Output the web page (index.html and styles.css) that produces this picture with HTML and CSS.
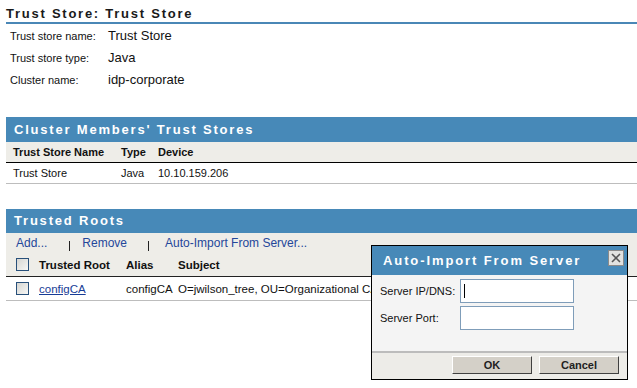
FILE: index.html
```html
<!DOCTYPE html>
<html>
<head>
<meta charset="utf-8">
<link rel="stylesheet" href="styles.css">
</head>
<body>
<div class="page">
  <h1 class="page-title">Trust Store: Trust Store</h1>
  <div class="props">
    <div class="prop-label">Trust store name:</div><div class="prop-value">Trust Store</div>
    <div class="prop-label">Trust store type:</div><div class="prop-value">Java</div>
    <div class="prop-label">Cluster name:</div><div class="prop-value">idp-corporate</div>
  </div>

  <section class="panel cluster">
    <div class="panel-head">Cluster Members' Trust Stores</div>
    <div class="c-row c-head">
      <div class="c-cell c-name">Trust Store Name</div>
      <div class="c-cell c-type">Type</div>
      <div class="c-cell">Device</div>
    </div>
    <div class="c-row c-data">
      <div class="c-cell c-name">Trust Store</div>
      <div class="c-cell c-type">Java</div>
      <div class="c-cell">10.10.159.206</div>
    </div>
  </section>

  <section class="panel roots">
    <div class="panel-head">Trusted Roots</div>
    <div class="toolbar">
      <a class="tool-link">Add...</a>
      <span class="sep sep-1"></span>
      <a class="tool-link">Remove</a>
      <span class="sep sep-2"></span>
      <a class="tool-link">Auto-Import From Server...</a>
    </div>
    <div class="r-row r-head">
      <span class="check"></span>
      <div class="r-cell r-root">Trusted Root</div>
      <div class="r-cell r-alias">Alias</div>
      <div class="r-cell">Subject</div>
    </div>
    <div class="r-row r-data">
      <span class="check"></span>
      <div class="r-cell r-root"><a class="row-link">configCA</a></div>
      <div class="r-cell r-alias">configCA</div>
      <div class="r-cell r-subject">O=jwilson_tree, OU=Organizational CA</div>
    </div>
  </section>
</div>

<div class="dialog">
  <div class="dlg-title">
    <span class="dlg-title-text">Auto-Import From Server</span>
    <span class="dlg-close"><svg width="14" height="14" viewBox="0 0 14 14"><path d="M3 3 L11 11 M11 3 L3 11" stroke="#555" stroke-width="1.6" fill="none"/></svg></span>
  </div>
  <div class="dlg-body">
    <div class="dlg-field">
      <label class="dlg-label">Server IP/DNS:</label>
      <div class="dlg-input"><span class="caret"></span></div>
    </div>
    <div class="dlg-field">
      <label class="dlg-label">Server Port:</label>
      <div class="dlg-input"></div>
    </div>
  </div>
  <div class="dlg-foot">
    <button class="btn">OK</button>
    <button class="btn">Cancel</button>
  </div>
</div>
</body>
</html>
```
FILE: styles.css
```css
* { box-sizing: border-box; }
body {
  margin: 0;
  background: #fff;
  font-family: "Liberation Sans", Arial, sans-serif;
  font-size: 11px;
  color: #111;
  width: 637px;
  height: 388px;
  overflow: hidden;
  position: relative;
}
.page { padding-left: 6px; }

.page-title {
  margin: 0;
  padding: 7px 0 1px 0;
  font-size: 13px;
  line-height: 14px;
  font-weight: bold;
  letter-spacing: 1.75px;
  color: #1a1a1a;
  border-bottom: 2px solid #4a87b6;
}

.props {
  display: grid;
  grid-template-columns: 102px auto;
  grid-auto-rows: 22px;
  align-items: baseline;
  padding-top: 1px;
}
.prop-label { padding-left: 4px; font-size: 11px; line-height: 22px; }
.prop-value { font-size: 13px; line-height: 22px; }

.panel { margin-top: 26px; }
.panel.roots { margin-top: 25px; }

.panel-head {
  background: #4789b8;
  color: #fff;
  font-weight: bold;
  font-size: 13px;
  letter-spacing: 1.8px;
  height: 25px;
  line-height: 25px;
  padding-left: 8px;
}
.roots .panel-head { height: 24px; line-height: 24px; }

.c-row { display: flex; height: 21px; line-height: 20px; }
.c-head { background: #eeede8; font-weight: bold; border-bottom: 1px solid #000; }
.c-data { border-bottom: 1px solid #bdbdbd; }
.c-cell { padding-left: 7px; }
.c-name { width: 108px; }
.c-type { width: 37px; }

.toolbar {
  background: #eeede8;
  height: 20px;
  line-height: 20px;
  padding-left: 10px;
  display: flex;
  font-size: 12px;
}
.tool-link { color: #24479a; text-decoration: none; }
.sep {
  width: 1px;
  height: 10px;
  background: #222;
  align-self: center;
  margin-top: 5px;
}
.sep-1 { margin-left: 22px; margin-right: 12px; }
.sep-2 { margin-left: 21px; margin-right: 16px; }

.r-row { display: flex; align-items: center; height: 24px; padding-left: 10px; }
.r-head { background: #eeede8; font-weight: bold; font-size: 11.5px; border-bottom: 1px solid #222; }
.r-data { border-bottom: 1px solid #bdbdbd; font-size: 11.5px; }
.check {
  width: 13px;
  height: 13px;
  border: 1px solid #28507a;
  background: linear-gradient(135deg, #d6d6d2, #f7f7f5);
  flex: none;
}
.r-cell { white-space: nowrap; }
.r-root { margin-left: 10px; width: 87px; }
.r-alias { width: 52px; }
.row-link { color: #173c96; text-decoration: underline; }

.dialog {
  position: absolute;
  left: 371px;
  top: 245px;
  width: 257px;
  height: 135px;
  border: 1px solid #000;
  background: #f4f4f4;
  display: flex;
  flex-direction: column;
}
.dlg-title {
  background: #4789b8;
  height: 29px;
  display: flex;
  align-items: center;
  justify-content: space-between;
  padding: 0 3px 0 11px;
}
.dlg-title-text {
  color: #fff;
  font-weight: bold;
  font-size: 13px;
  letter-spacing: 1.9px;
}
.dlg-close {
  width: 16px;
  height: 16px;
  background: #e2e2e0;
  border: 1px solid #8a8a8a;
  display: flex;
  align-items: center;
  justify-content: center;
  margin-top: -6px;
}
.dlg-body { flex: 1; padding: 3px 0 0 8px; }
.dlg-field { display: flex; align-items: center; height: 26px; margin-bottom: 1px; }
.dlg-label { width: 80px; font-size: 11px; }
.dlg-input {
  width: 114px;
  height: 24px;
  background: #fff;
  border: 1px solid #7f9db9;
  padding: 4px 0 0 3px;
}
.caret { display: block; width: 1px; height: 14px; background: #000; }
.dlg-foot {
  height: 28px;
  border-top: 2px solid #bcbcbc;
  background: #edece8;
  display: flex;
  justify-content: flex-end;
  align-items: flex-start;
  gap: 7px;
  padding: 3px 8px 0 0;
}
.btn {
  width: 80px;
  height: 18px;
  padding: 0;
  font-family: "Liberation Sans", Arial, sans-serif;
  font-size: 11px;
  font-weight: bold;
  color: #222;
  background: #d4d0c8;
  border: 1px solid;
  border-color: #fff #404040 #404040 #fff;
}
```
